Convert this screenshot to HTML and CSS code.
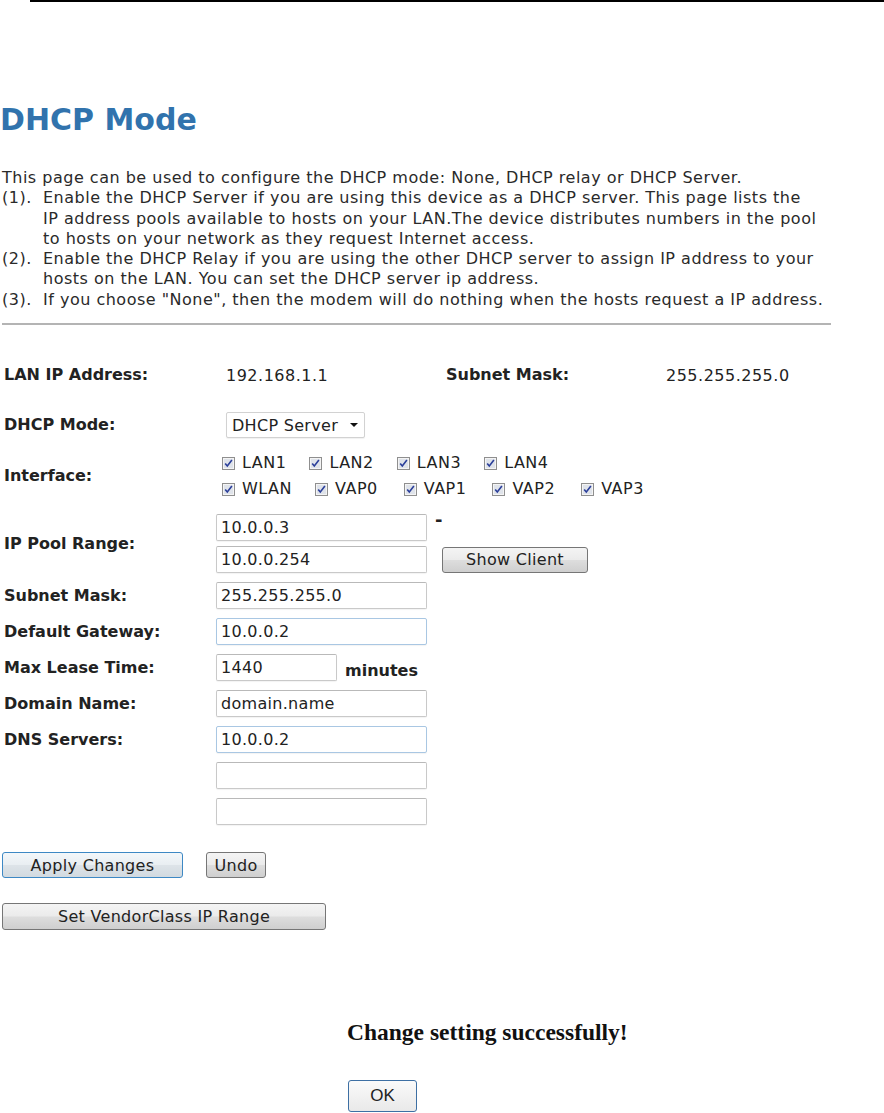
FILE: index.html
```html
<!DOCTYPE html>
<html lang="en">
<head>
    <meta charset="UTF-8">
    <title>DHCP Mode</title>
    <link rel="stylesheet" href="styles.css">
</head>
<body>
    <div class="topline"></div>

    <h1>DHCP Mode</h1>

    <div class="intro">
        <div class="intro-line">This page can be used to configure the DHCP mode: None, DHCP relay or DHCP Server.</div>
        <div class="intro-item">
            <span class="num">(1).</span>
            <span>Enable the DHCP Server if you are using this device as a DHCP server. This page lists the<br>IP address pools available to hosts on your LAN.The device distributes numbers in the pool<br>to hosts on your network as they request Internet access.</span>
        </div>
        <div class="intro-item">
            <span class="num">(2).</span>
            <span>Enable the DHCP Relay if you are using the other DHCP server to assign IP address to your<br>hosts on the LAN. You can set the DHCP server ip address.</span>
        </div>
        <div class="intro-item">
            <span class="num">(3).</span>
            <span>If you choose "None", then the modem will do nothing when the hosts request a IP address.</span>
        </div>
    </div>

    <div class="rule"></div>

    <form class="dhcp-form">
        <!-- info -->
        <div class="row row-info">
            <span class="label">LAN IP Address:</span>
            <span class="value">192.168.1.1</span>
            <span class="label label-mask">Subnet Mask:</span>
            <span class="value">255.255.255.0</span>
        </div>

        <div class="row row-mode">
            <span class="label">DHCP Mode:</span>
            <div class="select-wrap">
                <select>
                    <option>None</option>
                    <option>DHCP Relay</option>
                    <option selected>DHCP Server</option>
                </select>
                <svg class="arrow" width="8" height="4" viewBox="0 0 8 4"><path d="M0 0h8L4 4z" fill="#111"/></svg>
            </div>
        </div>

        <div class="row row-iface">
            <span class="label">Interface:</span>
            <div class="checks">
                <div class="check-line">
                    <label class="check"><svg class="cb" width="13" height="13" viewBox="0 0 13 13"><rect x="0.5" y="0.5" width="12" height="12" fill="#f4f4f4" stroke="#8f8f8f"/><rect x="2" y="2" width="9" height="9" fill="#dfe3ea"/><path d="M3.2 6.4l2.1 2.6 4.6-6" fill="none" stroke="#2b3f9a" stroke-width="1.6"/></svg>LAN1</label>
                    <label class="check"><svg class="cb" width="13" height="13" viewBox="0 0 13 13"><rect x="0.5" y="0.5" width="12" height="12" fill="#f4f4f4" stroke="#8f8f8f"/><rect x="2" y="2" width="9" height="9" fill="#dfe3ea"/><path d="M3.2 6.4l2.1 2.6 4.6-6" fill="none" stroke="#2b3f9a" stroke-width="1.6"/></svg>LAN2</label>
                    <label class="check"><svg class="cb" width="13" height="13" viewBox="0 0 13 13"><rect x="0.5" y="0.5" width="12" height="12" fill="#f4f4f4" stroke="#8f8f8f"/><rect x="2" y="2" width="9" height="9" fill="#dfe3ea"/><path d="M3.2 6.4l2.1 2.6 4.6-6" fill="none" stroke="#2b3f9a" stroke-width="1.6"/></svg>LAN3</label>
                    <label class="check"><svg class="cb" width="13" height="13" viewBox="0 0 13 13"><rect x="0.5" y="0.5" width="12" height="12" fill="#f4f4f4" stroke="#8f8f8f"/><rect x="2" y="2" width="9" height="9" fill="#dfe3ea"/><path d="M3.2 6.4l2.1 2.6 4.6-6" fill="none" stroke="#2b3f9a" stroke-width="1.6"/></svg>LAN4</label>
                </div>
                <div class="check-line check-line-vap">
                    <label class="check"><svg class="cb" width="13" height="13" viewBox="0 0 13 13"><rect x="0.5" y="0.5" width="12" height="12" fill="#f4f4f4" stroke="#8f8f8f"/><rect x="2" y="2" width="9" height="9" fill="#dfe3ea"/><path d="M3.2 6.4l2.1 2.6 4.6-6" fill="none" stroke="#2b3f9a" stroke-width="1.6"/></svg>WLAN</label>
                    <label class="check"><svg class="cb" width="13" height="13" viewBox="0 0 13 13"><rect x="0.5" y="0.5" width="12" height="12" fill="#f4f4f4" stroke="#8f8f8f"/><rect x="2" y="2" width="9" height="9" fill="#dfe3ea"/><path d="M3.2 6.4l2.1 2.6 4.6-6" fill="none" stroke="#2b3f9a" stroke-width="1.6"/></svg>VAP0</label>
                    <label class="check"><svg class="cb" width="13" height="13" viewBox="0 0 13 13"><rect x="0.5" y="0.5" width="12" height="12" fill="#f4f4f4" stroke="#8f8f8f"/><rect x="2" y="2" width="9" height="9" fill="#dfe3ea"/><path d="M3.2 6.4l2.1 2.6 4.6-6" fill="none" stroke="#2b3f9a" stroke-width="1.6"/></svg>VAP1</label>
                    <label class="check"><svg class="cb" width="13" height="13" viewBox="0 0 13 13"><rect x="0.5" y="0.5" width="12" height="12" fill="#f4f4f4" stroke="#8f8f8f"/><rect x="2" y="2" width="9" height="9" fill="#dfe3ea"/><path d="M3.2 6.4l2.1 2.6 4.6-6" fill="none" stroke="#2b3f9a" stroke-width="1.6"/></svg>VAP2</label>
                    <label class="check"><svg class="cb" width="13" height="13" viewBox="0 0 13 13"><rect x="0.5" y="0.5" width="12" height="12" fill="#f4f4f4" stroke="#8f8f8f"/><rect x="2" y="2" width="9" height="9" fill="#dfe3ea"/><path d="M3.2 6.4l2.1 2.6 4.6-6" fill="none" stroke="#2b3f9a" stroke-width="1.6"/></svg>VAP3</label>
                </div>
            </div>
        </div>

        <div class="row row-pool">
            <span class="label">IP Pool Range:</span>
            <div class="pool-grid">
                <input type="text" value="10.0.0.3">
                <span class="dash">-</span>
                <input type="text" value="10.0.0.254">
                <button type="button" class="btn btn-client">Show Client</button>
            </div>
        </div>

        <div class="row">
            <span class="label">Subnet Mask:</span>
            <input type="text" value="255.255.255.0">
        </div>
        <div class="row">
            <span class="label">Default Gateway:</span>
            <input type="text" class="focus" value="10.0.0.2">
        </div>
        <div class="row">
            <span class="label">Max Lease Time:</span>
            <input type="text" class="short" value="1440">
            <span class="unit">minutes</span>
        </div>
        <div class="row">
            <span class="label">Domain Name:</span>
            <input type="text" value="domain.name">
        </div>
        <div class="row row-dns">
            <span class="label">DNS Servers:</span>
            <div class="dns-list">
                <input type="text" class="focus" value="10.0.0.2">
                <input type="text" value="">
                <input type="text" value="">
            </div>
        </div>

        <div class="actions">
            <button type="button" class="btn btn-apply">Apply Changes</button>
            <button type="button" class="btn btn-undo">Undo</button>
        </div>
        <div class="actions actions-vendor">
            <button type="button" class="btn btn-vendor">Set VendorClass IP Range</button>
        </div>
    </form>

    <div class="message">
        <div class="message-text">Change setting successfully!</div>
        <button type="button" class="btn-ok">OK</button>
    </div>
</body>
</html>
```

FILE: styles.css
```css
:root {
    --text-color: #222;
    --title-color: #3173ad;
    --input-border: #c9c9c9;
    --focus-border: #a9c7e3;
    --btn-border: #767676;
    --btn-focus: #3d88c4;
}

body {
    margin: 0;
    font-family: 'DejaVu Sans', Verdana, sans-serif;
    font-size: 16px;
    color: var(--text-color);
    background: #fff;
}

.topline {
    height: 2px;
    margin-left: 30px;
    background-color: #000;
}

h1 {
    margin: 100px 0 0 0;
    font-size: 30px;
    line-height: 36px;
    font-weight: bold;
    color: var(--title-color);
}

.intro {
    margin-top: 30px;
    line-height: 20.3px;
    padding-left: 2px;
    letter-spacing: 0.5px;
    color: #2a2a2a;
}

.intro-item {
    display: flex;
}

.intro-item .num {
    width: 41px;
    flex: none;
}

.rule {
    width: 829px;
    height: 2px;
    margin: 13px 0 0 2px;
    background-color: #b4b4b4;
}

.dhcp-form {
    margin: 0;
}

.row {
    display: flex;
    align-items: center;
    margin-top: 9px;
}

.label {
    width: 216px;
    flex: none;
    box-sizing: border-box;
    padding-left: 4px;
    font-weight: bold;
    line-height: 20px;
}

.row-info {
    height: 30px;
    margin-top: 35px;
}

.row-info .value {
    width: 230px;
    box-sizing: border-box;
    padding-left: 10px;
    letter-spacing: 0.5px;
}

.row-info .label-mask {
    width: 220px;
    padding-left: 0;
}

.row-info .value:last-child {
    width: auto;
    padding-left: 0;
}

.row-mode {
    height: 30px;
    margin-top: 20px;
}

.select-wrap {
    position: relative;
    margin-left: 10px;
}

.select-wrap select {
    appearance: none;
    -webkit-appearance: none;
    width: 139px;
    height: 26px;
    padding: 0 0 0 5px;
    border: 1px solid #d2d2d2;
    border-radius: 2px;
    background: #fff;
    font-family: inherit;
    font-size: 16px;
    letter-spacing: 0.3px;
    color: var(--text-color);
    box-shadow: 0 1px 1px rgba(0, 0, 0, 0.06);
}

.select-wrap .arrow {
    position: absolute;
    right: 7px;
    top: 11px;
    pointer-events: none;
}

.row-iface {
    height: 52px;
    margin-top: 10px;
}

.check-line {
    display: flex;
    height: 26px;
    align-items: center;
    margin-left: 6px;
}

.check {
    display: flex;
    align-items: center;
    margin-right: 23px;
    line-height: 20px;
    letter-spacing: 0.5px;
}

.check-line-vap .check + .check {
    margin-right: 26px;
}

.check .cb {
    margin-right: 7px;
}

input[type="text"] {
    width: 211px;
    height: 27px;
    box-sizing: border-box;
    padding: 0 4px;
    border: 1px solid var(--input-border);
    border-top-color: #b9b9b9;
    border-radius: 2px;
    font-family: inherit;
    font-size: 16px;
    letter-spacing: 0.3px;
    color: var(--text-color);
    background: #fff;
    box-shadow: 0 1px 1px rgba(0, 0, 0, 0.05);
}

input.focus {
    border-color: var(--focus-border);
}

input.short {
    width: 121px;
}

.row-pool {
    margin-top: 12px;
}

.pool-grid {
    display: grid;
    grid-template-columns: 211px auto;
    row-gap: 5px;
    align-items: center;
}

.dash {
    align-self: start;
    margin-left: 8px;
    font-size: 18px;
    line-height: 12px;
    font-weight: bold;
}

.unit {
    margin: 5px 0 0 8px;
    font-weight: bold;
}

.row-dns {
    align-items: flex-start;
}

.row-dns .label {
    line-height: 27px;
}

.dns-list {
    display: flex;
    flex-direction: column;
    gap: 9px;
}

.btn {
    height: 26px;
    padding: 0;
    border: 1px solid var(--btn-border);
    border-radius: 3px;
    background: linear-gradient(#f4f4f4, #ebebeb 48%, #dddddd 52%, #cfcfcf);
    font-family: inherit;
    font-size: 16px;
    letter-spacing: 0.3px;
    color: var(--text-color);
}

.btn-client {
    width: 146px;
    margin-left: 15px;
}

.actions {
    display: flex;
    gap: 23px;
    margin: 27px 0 0 2px;
}

.btn-apply {
    width: 181px;
    border-color: var(--btn-focus);
    background: linear-gradient(#f3f7fa, #e9eef2 48%, #dde3e8 52%, #d2dae0);
}

.btn-undo {
    width: 60px;
}

.actions-vendor {
    margin-top: 25px;
}

.btn-vendor {
    width: 324px;
    height: 27px;
}

.message {
    margin: 88px 0 0 347px;
}

.message-text {
    font-family: 'Liberation Serif', 'Times New Roman', serif;
    font-size: 23.5px;
    font-weight: bold;
    line-height: 28px;
    color: #111;
}

.btn-ok {
    width: 69px;
    height: 32px;
    margin: 34px 0 0 1px;
    padding: 0;
    border: 1px solid #3d6fa3;
    border-radius: 3px;
    background: linear-gradient(#fafafa, #e9e9e9);
    font-family: 'Liberation Sans', Arial, sans-serif;
    font-size: 17px;
    color: #222;
}
```
